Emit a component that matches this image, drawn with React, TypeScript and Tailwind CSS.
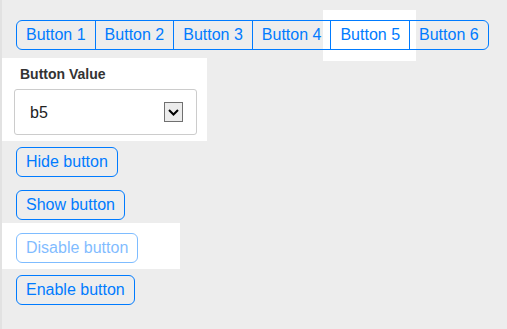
import React, { useState } from "react";

const labels = ["Button 1", "Button 2", "Button 3", "Button 4", "Button 5", "Button 6"];

const btn =
  "h-[30px] px-[9px] border border-[#007bff] text-[#007bff] text-[16px] leading-none bg-transparent";

export default function App() {
  const [value, setValue] = useState("b5");

  return (
    <div
      className="w-[507px] h-[329px] bg-[#ededed] border-l-2 border-[#e2e2e2] overflow-hidden"
      style={{ fontFamily: '"Liberation Sans", Arial, sans-serif' }}
    >
      {/* button group */}
      <div className="pt-5 pl-[14px] flex isolate">
        {labels.map((l, i) => (
          <button
            key={l}
            className={`${btn} relative ${i > 0 ? "-ml-px" : ""} ${
              i === 0 ? "rounded-l-[6px]" : ""
            } ${i === labels.length - 1 ? "rounded-r-[6px]" : ""}`}
          >
            {i === 4 && (
              <span className="absolute -left-2 -right-[7px] -top-[11px] -bottom-3 bg-white -z-10" />
            )}
            {l}
          </button>
        ))}
      </div>

      {/* select panel */}
      <div className="mt-2 w-[205px] h-[83px] bg-white pl-3 pt-[8px]">
        <div className="pl-1.5 text-[14px] leading-[16px] font-bold text-[#333]">Button Value</div>
        <div className="mt-[7px] w-[183px] h-[46px] border border-[#cccccc] rounded-[3px] flex items-center justify-between pl-[15px] pr-[13px] pt-[2px]">
          <span className="text-[16px] text-[#222]">{value}</span>
          <span
            className="w-[19px] h-[20px] -mt-[2px] border border-[#707070] bg-[#ececec] flex items-center justify-center"
            onClick={() => setValue(value)}
          >
            <svg width="11" height="7" viewBox="0 0 11 7">
              <path d="M1 1l4.5 4.5L10 1" fill="none" stroke="#000" strokeWidth="2" />
            </svg>
          </span>
        </div>
      </div>

      <div className="pl-[14px] pt-[6px] flex flex-col items-start">
        <button className={`${btn} h-[29px] rounded-[6px]`}>Hide button</button>
        <button className={`${btn} mt-[13px] rounded-[6px]`}>Show button</button>
      </div>

      <div className="mt-[3px] w-[178px] h-[46px] bg-white pl-[14px] pt-[10px]">
        <button className={`${btn} h-[29px] rounded-[6px] opacity-50`} disabled>
          Disable button
        </button>
      </div>

      <div className="pl-[14px] pt-[6px]">
        <button className={`${btn} rounded-[6px]`}>Enable button</button>
      </div>
    </div>
  );
}
